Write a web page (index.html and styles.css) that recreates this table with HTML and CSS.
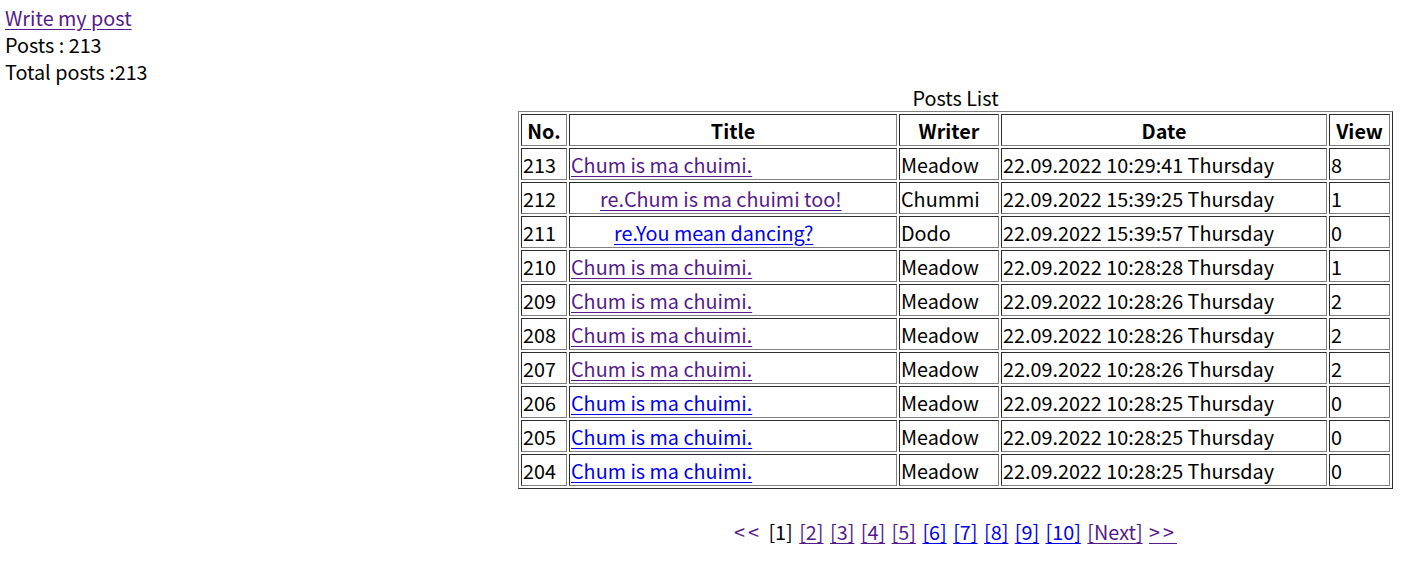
FILE: index.html
```html
<!DOCTYPE html>
<html lang="en">
<head>
<meta charset="utf-8">
<title>Posts List</title>
<link rel="stylesheet" href="styles.css">
</head>
<body>
<header class="summary">
  <a class="visited" href="#write">Write my post</a>
  <div>Posts : 213</div>
  <div>Total posts :213</div>
</header>
<main class="board">
  <table class="posts">
    <caption>Posts List</caption>
    <thead>
      <tr>
        <th class="c-no">No.</th>
        <th class="c-title">Title</th>
        <th class="c-writer">Writer</th>
        <th class="c-date">Date</th>
        <th class="c-view">View</th>
      </tr>
    </thead>
    <tbody>
      <tr><td>213</td><td><a class="visited" href="#213">Chum is ma chuimi.</a></td><td>Meadow</td><td>22.09.2022 10:29:41 Thursday</td><td>8</td></tr>
      <tr><td>212</td><td class="re1"><a class="visited" href="#212">re.Chum is ma chuimi too!</a></td><td>Chummi</td><td>22.09.2022 15:39:25 Thursday</td><td>1</td></tr>
      <tr><td>211</td><td class="re2"><a href="#211">re.You mean dancing?</a></td><td>Dodo</td><td>22.09.2022 15:39:57 Thursday</td><td>0</td></tr>
      <tr><td>210</td><td><a class="visited" href="#210">Chum is ma chuimi.</a></td><td>Meadow</td><td>22.09.2022 10:28:28 Thursday</td><td>1</td></tr>
      <tr><td>209</td><td><a class="visited" href="#209">Chum is ma chuimi.</a></td><td>Meadow</td><td>22.09.2022 10:28:26 Thursday</td><td>2</td></tr>
      <tr><td>208</td><td><a class="visited" href="#208">Chum is ma chuimi.</a></td><td>Meadow</td><td>22.09.2022 10:28:26 Thursday</td><td>2</td></tr>
      <tr><td>207</td><td><a class="visited" href="#207">Chum is ma chuimi.</a></td><td>Meadow</td><td>22.09.2022 10:28:26 Thursday</td><td>2</td></tr>
      <tr><td>206</td><td><a href="#206">Chum is ma chuimi.</a></td><td>Meadow</td><td>22.09.2022 10:28:25 Thursday</td><td>0</td></tr>
      <tr><td>205</td><td><a href="#205">Chum is ma chuimi.</a></td><td>Meadow</td><td>22.09.2022 10:28:25 Thursday</td><td>0</td></tr>
      <tr><td>204</td><td><a href="#204">Chum is ma chuimi.</a></td><td>Meadow</td><td>22.09.2022 10:28:25 Thursday</td><td>0</td></tr>
    </tbody>
  </table>
  <nav class="pager"><span class="first">&lt;&lt;</span> <span class="current">[1]</span> <a class="visited" href="#p2">[2]</a> <a class="visited" href="#p3">[3]</a> <a class="visited" href="#p4">[4]</a> <a class="visited" href="#p5">[5]</a> <a href="#p6">[6]</a> <a href="#p7">[7]</a> <a href="#p8">[8]</a> <a href="#p9">[9]</a> <a href="#p10">[10]</a> <a class="visited" href="#next">[Next]</a> <a class="visited last" href="#last">&gt;&gt;</a></nav>
</main>
</body>
</html>
```

FILE: styles.css
```css
html, body {
  background: #ffffff;
}

body {
  margin: 4px 5px 5px;
  font-family: "Noto Sans CJK KR", "Noto Sans", sans-serif;
  font-size: 19.8px;
  line-height: 27px;
  color: #000000;
}

a {
  color: #0000ee;
  text-decoration: underline;
  text-underline-offset: 3px;
}

a.visited {
  color: #551a8b;
}

.summary {
  display: block;
}

.board {
  margin-left: 513px;
  width: 875px;
}

.posts {
  width: 875px;
  table-layout: fixed;
  border: 1px outset #808080;
  border-spacing: 2px;
  border-collapse: separate;
}

.posts caption {
  line-height: 26px;
  text-align: center;
}

.posts th,
.posts td {
  box-sizing: border-box;
  border: 1px inset #808080;
  padding: 2px 1px 0;
  line-height: 28px;
  white-space: nowrap;
  text-align: left;
}

.posts th {
  font-weight: bold;
  text-align: center;
}

.c-no { width: 46px; }
.c-title { width: 328px; }
.c-writer { width: 100px; }
.c-date { width: 326px; }
.c-view { width: 61px; }

.posts td.re1 { padding-left: 30px; }
.posts td.re2 { padding-left: 44px; }

.pager {
  margin-top: 29px;
  text-align: center;
  line-height: 27px;
  word-spacing: 2px;
}

.pager .first,
.pager .last {
  letter-spacing: 3px;
}

.pager .first {
  color: #551a8b;
}

.pager .current {
  color: #000000;
}
```
